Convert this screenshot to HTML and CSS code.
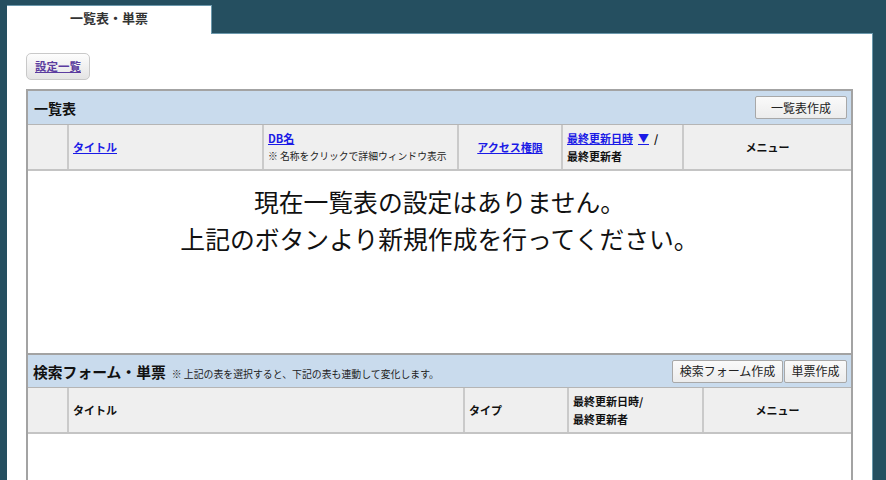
FILE: index.html
```html
<!DOCTYPE html>
<html lang="ja">
<head>
<meta charset="utf-8">
<link rel="stylesheet" href="styles.css">
</head>
<body>
<div class="tabbar">
  <div class="tab">一覧表・単票</div>
</div>
<div class="content">
  <div class="toolbar">
    <a class="btn-round" href="#">設定一覧</a>
  </div>
  <div class="panel">
    <div class="panel-head">
      <div class="panel-title">一覧表</div>
      <div class="head-btns"><button class="btn btn-wide">一覧表作成</button></div>
    </div>
    <div class="thead grid1">
      <div class="th"></div>
      <div class="th"><a href="#">タイトル</a></div>
      <div class="th stack"><a href="#">DB名</a><span class="note">※ 名称をクリックで詳細ウィンドウ表示</span></div>
      <div class="th center"><a href="#">アクセス権限</a></div>
      <div class="th stack"><span><a href="#">最終更新日時<span class="tri">▼</span></a>/</span><span>最終更新者</span></div>
      <div class="th center">メニュー</div>
    </div>
    <div class="empty">
      <p>現在一覧表の設定はありません。</p>
      <p>上記のボタンより新規作成を行ってください。</p>
    </div>
    <div class="panel-head sec2">
      <div class="panel-title wide">検索フォーム・単票<span class="head-note">※ 上記の表を選択すると、下記の表も連動して変化します。</span></div>
      <div class="head-btns"><button class="btn btn-search">検索フォーム作成</button><button class="btn btn-single">単票作成</button></div>
    </div>
    <div class="thead grid2">
      <div class="th"></div>
      <div class="th">タイトル</div>
      <div class="th">タイプ</div>
      <div class="th stack"><span>最終更新日時/</span><span>最終更新者</span></div>
      <div class="th center">メニュー</div>
    </div>
    <div class="body2"></div>
  </div>
</div>
</body>
</html>
```

FILE: styles.css
```css
* { box-sizing: border-box; }
html, body {
  margin: 0;
  padding: 0;
  height: 100%;
  overflow: hidden;
}
body {
  background: #254f60;
  font-family: "Noto Sans CJK JP", "Noto Sans", sans-serif;
  color: #111;
}
.tabbar {
  height: 33px;
  padding-left: 7px;
  padding-top: 5px;
}
.tab {
  width: 205px;
  height: 29px;
  background: #fff;
  border-right: 1px solid #6b98ac;
  border-top: 1px solid #6b98ac;
  font-size: 13px;
  font-weight: bold;
  color: #333;
  text-align: center;
  line-height: 24px;
  position: relative;
  z-index: 1;
}
.content {
  margin-left: 7px;
  width: 866px;
  height: calc(100vh - 33px);
  overflow: hidden;
  background: #fff;
  border-top: 1px solid #6b98ac;
  border-right: 1px solid #6b98ac;
  padding: 18px 0 0 19px;
}
.toolbar {
  height: 27px;
  margin-bottom: 10px;
}
.btn-round {
  display: inline-flex;
  align-items: center;
  justify-content: center;
  width: 64px;
  height: 27px;
  border: 1px solid #c9c9c9;
  border-radius: 5px;
  background: linear-gradient(#fdfdfd, #e4e4e4);
  color: #5b3c9f;
  font-size: 11.5px;
  font-weight: bold;
  text-decoration: underline;
}
.panel {
  width: 827px;
  border: 2px solid #a3a3a3;
  border-bottom: none;
  height: 400px;
}
.panel-head {
  height: 34px;
  background: #c9dbed;
  display: flex;
  align-items: center;
  justify-content: space-between;
  padding: 0 4px 0 6px;
  border-bottom: 1px solid #b5b5b5;
}
.panel-head.sec2 {
  border-top: 2px solid #a3a3a3;
  height: 35px;
  padding-left: 5px;
}
.panel-title {
  font-size: 14px;
  font-weight: bold;
  color: #111;
}
.panel-title.wide {
  font-size: 14.8px;
}
.head-note {
  font-size: 9.9px;
  font-weight: normal;
  margin-left: 6px;
  color: #222;
}
.head-btns {
  display: flex;
  gap: 1px;
}
.btn {
  font-family: "Noto Sans CJK JP", "Noto Sans", sans-serif;
  font-size: 12px;
  height: 23px;
  padding: 0;
  background: linear-gradient(#fafafa, #ececec);
  border: 1px solid #a8a8a8;
  border-radius: 2px;
  color: #222;
  line-height: 20px;
}
.btn-wide { width: 92px; }
.btn-search { width: 111px; }
.btn-single { width: 63px; }
.thead {
  display: grid;
  height: 46px;
  background: #efefef;
  border-bottom: 2px solid #c4c4c4;
}
.grid1 { grid-template-columns: 39px 195px 195px 104px 121px 1fr; }
.grid2 { grid-template-columns: 39px 396px 104px 135px 1fr; }
.th {
  font-size: 11px;
  font-weight: bold;
  color: #111;
  padding: 0 4px;
  display: flex;
  align-items: center;
  line-height: 18px;
}
.th + .th { border-left: 2px solid #cacaca; }
.th.stack {
  flex-direction: column;
  align-items: flex-start;
  justify-content: center;
}
.th.center { justify-content: center; }
.th a {
  color: #1a1ae6;
  text-decoration: underline;
}
.tri {
  margin: 0 5px 0 5px;
}
.note {
  font-size: 9.8px;
  font-weight: normal;
  color: #222;
}
.empty {
  height: 182px;
  padding-top: 12px;
  text-align: center;
}
.empty p {
  margin: 0;
  font-size: 24.8px;
  line-height: 37px;
  color: #111;
}
.body2 { height: 100px; }
```
